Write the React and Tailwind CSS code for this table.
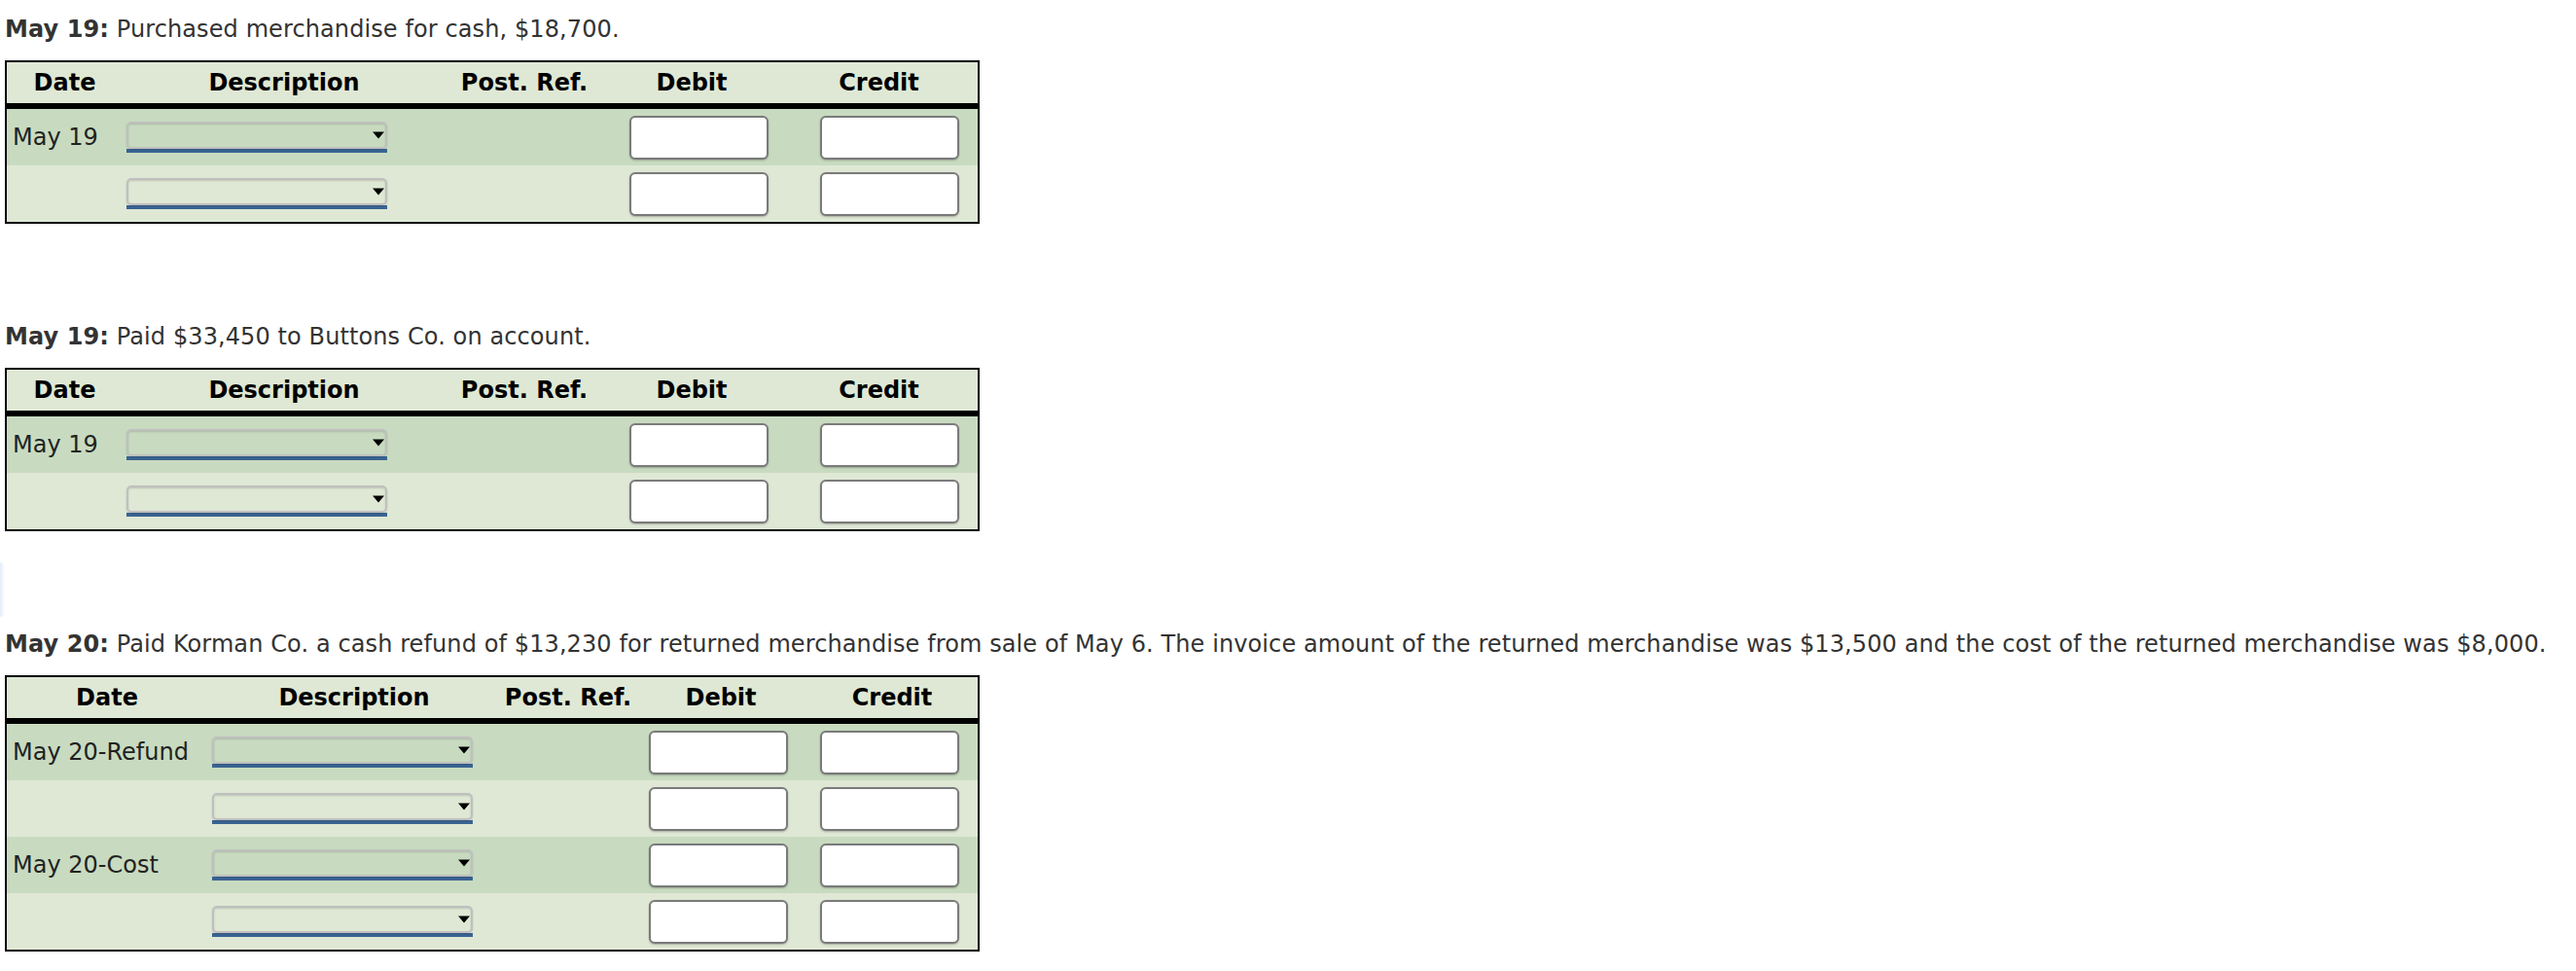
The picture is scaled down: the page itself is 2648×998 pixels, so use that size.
import React from 'react';

const HEADERS = ['Date', 'Description', 'Post. Ref.', 'Debit', 'Credit'];

// column layouts, measured off the reference
const SHORT = {
  grid: 'grid-cols-[119px_332px_162px_182px_203px]',
  sel: 'pl-[4px]',
  debit: 'pl-[27px]',
  credit: 'pl-[41px]',
};
const WIDE = {
  grid: 'grid-cols-[206px_302px_138px_176px_176px]',
  sel: 'pl-[5px]',
  debit: 'pl-[14px]',
  credit: 'pl-[14px]',
};

function AccountSelect() {
  return (
    <div className="w-[268px]">
      <div className="relative h-[28px] rounded-[5px] border-2 border-[#bfbfbf] shadow-[inset_0_1px_2px_rgba(0,0,0,0.15),0_1px_2px_rgba(0,0,0,0.15)]">
        <span className="absolute right-[1px] top-1/2 -translate-y-1/2 w-0 h-0 border-l-[6px] border-r-[6px] border-t-[7px] border-l-transparent border-r-transparent border-t-black" />
      </div>
      <div className="h-[4px] bg-[#3a6493]" />
    </div>
  );
}

function AmountInput() {
  return (
    <input
      type="text"
      className="block w-[143px] h-[45px] rounded-[6px] border-2 border-[#7a7a7a] bg-white shadow-[0_1px_2px_rgba(0,0,0,0.25)] focus:outline-none"
    />
  );
}

function Journal({ layout, rows }) {
  return (
    <div className="w-[1002px] border-2 border-black">
      <div className={`grid ${layout.grid} h-[42px] items-center bg-[#dfe8d5] font-bold text-black`}>
        {HEADERS.map((h) => (
          <div key={h} className="text-center whitespace-nowrap">{h}</div>
        ))}
      </div>
      <div className="h-[6px] bg-black" />
      {rows.map((date, i) => (
        <div
          key={i}
          className={`grid ${layout.grid} h-[58px] items-center ${i % 2 === 0 ? 'bg-[#c8dbc0]' : 'bg-[#dfe8d5]'}`}
        >
          <div className="pl-[6px] whitespace-nowrap text-[#222]">{date}</div>
          <div className={layout.sel}><AccountSelect /></div>
          <div />
          <div className={layout.debit}><AmountInput /></div>
          <div className={layout.credit}><AmountInput /></div>
        </div>
      ))}
    </div>
  );
}

function Entry({ day, text, layout, rows, first }) {
  return (
    <section className={first ? '' : 'mt-[102px]'}>
      <p className="mb-[18px] h-[28px] leading-[28px] whitespace-nowrap tracking-[0.1px] text-[#333]">
        <b>{day}:</b> {text}
      </p>
      <Journal layout={layout} rows={rows} />
    </section>
  );
}

export default function App() {
  return (
    <div className="relative min-h-screen bg-white pl-[5px] pt-[16px] text-[24px] font-['DejaVu_Sans',Verdana,sans-serif]">
      {/* faint focus glow at the left edge */}
      <div className="absolute left-0 top-[578px] w-[5px] h-[56px] rounded-r-full bg-linear-to-r from-[#e3edf9] to-transparent" />

      <Entry
        first
        day="May 19"
        text="Purchased merchandise for cash, $18,700."
        layout={SHORT}
        rows={['May 19', '']}
      />
      <Entry
        day="May 19"
        text="Paid $33,450 to Buttons Co. on account."
        layout={SHORT}
        rows={['May 19', '']}
      />
      <Entry
        day="May 20"
        text="Paid Korman Co. a cash refund of $13,230 for returned merchandise from sale of May 6. The invoice amount of the returned merchandise was $13,500 and the cost of the returned merchandise was $8,000."
        layout={WIDE}
        rows={['May 20-Refund', '', 'May 20-Cost', '']}
      />
    </div>
  );
}
